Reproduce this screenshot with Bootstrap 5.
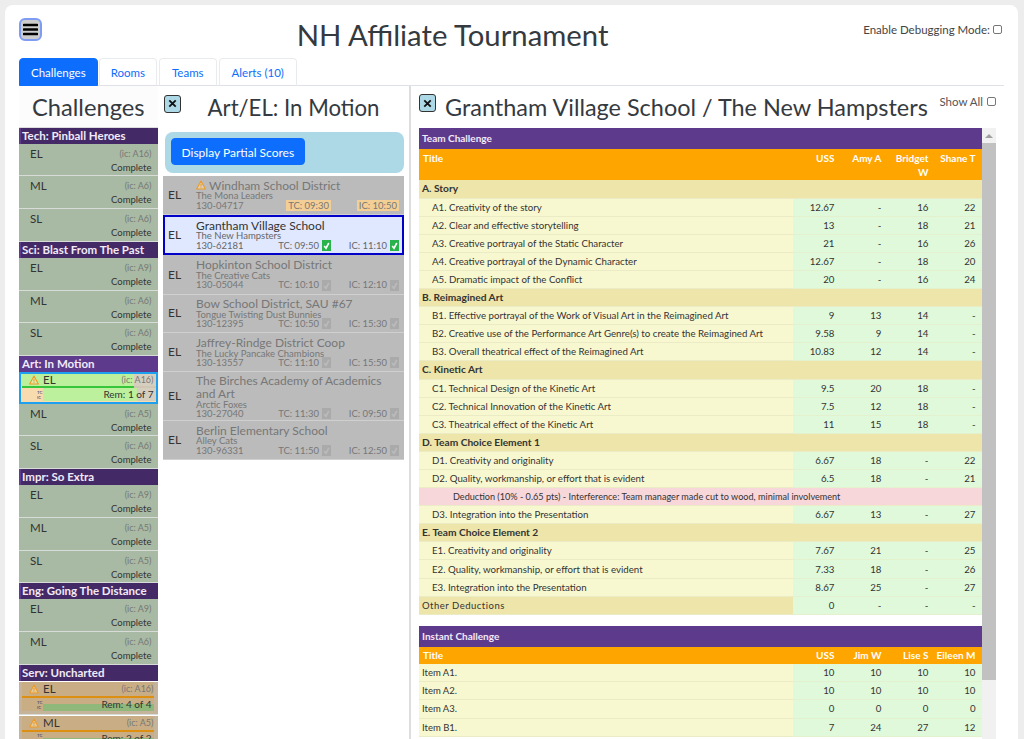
<!DOCTYPE html>
<html lang="en">
<head>
<meta charset="utf-8">
<title>NH Affiliate Tournament</title>
<link href="https://cdn.jsdelivr.net/npm/bootstrap@5.3.0/dist/css/bootstrap.min.css" rel="stylesheet">
<style>
html,body{height:739px;overflow:hidden}
body{background:#eeeded;font-family:"Lato","Noto Sans",sans-serif;color:#333}
.sheet{margin:5px 6px 0 5px;height:734px;background:#fff;border-radius:8px 8px 0 0;padding:13px 14px 0;display:flex;flex-direction:column;overflow:hidden}
.topbar{height:39.500px;display:flex;align-items:flex-start}
.burger{width:23px;height:23px;padding:0;background:#ccc;border:2px solid #7f9cf5;border-radius:6px;display:flex;align-items:center;justify-content:center}
.page-title{flex:1;text-align:center;font-size:29.300px;font-weight:400;margin:0;line-height:34px;color:#343a40}
.debug{font-size:11.500px;color:#444;margin:3px 2px 0 0;display:flex;align-items:center;gap:3px;white-space:nowrap}
.tinybox{width:9px;height:9px;margin:0;appearance:none;border:1px solid #777;border-radius:2px;background:#fff;flex:none}
.tabs-wrap.nav-tabs{height:28.500px;font-size:11.500px;flex-wrap:nowrap;border-color:#dee2e6}
.tabs-wrap .nav-link{height:28.500px;padding:5px 11px;border-radius:4px 4px 0 0;color:#0d6efd;border:1px solid #e9ecef;border-bottom-color:#dee2e6;margin-right:1px}
.tabs-wrap .nav-item+.nav-item+.nav-item .nav-link{padding:5px 12px;margin-left:1px}
.tabs-wrap .nav-link.active{background:#0d6efd;color:#fff;border-color:#0d6efd}
.panes{display:flex;flex:1;min-height:0}
.pane-a{width:138.500px;flex:none;overflow:hidden}
.pane-b{width:253.500px;flex:none;border-right:2px solid #ddd;padding:0 5px 0 5.500px;overflow:hidden}
.pane-c{flex:1;min-width:0;padding:0 0 0 8px;overflow:hidden}
.pane-a h2{font-size:23.700px;font-weight:400;margin:0;height:41.500px;line-height:43px;text-align:center;background:#fcfcfc;border-bottom:1px solid #ddd;color:#343a40}
.grp{background:#432a66;color:#f2eaf8;font-weight:700;font-size:11.500px;height:16.400px;line-height:16px;padding-left:1px;border-left:2px solid #5e3a8c;white-space:nowrap}
.grp.on{background:#5e3a8c}
.ev{height:32.600px;background:#a8baa3;border-bottom:1px solid #d8dcd8;font-size:11.500px;color:#333;padding:2px 5px 0 11px}
.ev-top{display:flex;justify-content:space-between;line-height:15px;padding-right:1px}
.ev-ic{font-size:9px;color:#777}
.ev-st{font-size:9.500px;text-align:right;line-height:13px;padding:0 1px 0 0;color:#333}
.ev.sel{height:31.500px;background:#f8dcb0;border:2px solid #1ea0f0;padding:0}
.ev-tan{background:#c5b49c;padding:0}
.ev-head{display:flex;justify-content:space-between;align-items:center;line-height:12px;height:12px;padding:0 2px 0 8px}
.ev.sel .ev-head{background:linear-gradient(90deg,#bdf09c 84%,#d6cfc0 84%)}
.ev-tan .ev-head{height:14px;margin:1px 4px 0 3px;padding:0 0 0 7px;background:#c9ae85}
.ev-label{display:flex;align-items:center;gap:4px}
.meter{height:2px;margin:0 0 0 1px;background:#cfc6b4}
.meter i{display:block;height:2px;background:#36c63c}
.ev-tan .meter{margin:0 4px 0 3px;background:#dd8f12}
.rem{display:flex;align-items:center;font-size:10px;height:13px}
.rem-key{width:6px;margin-left:16px;font-size:4.500px;line-height:5px;color:#336;flex:none;overflow:visible}
.rem-fill{flex:1;text-align:right;padding-right:2px;background:linear-gradient(90deg,#bdf09c 83%,#d6cfc0 83%);height:100%;line-height:13px}
.ev-tan .rem{margin:0 4px 0 3px;background:#c9ae85}
.ev-tan .rem-key{margin-left:15px}
.ev-tan .rem-fill{background:linear-gradient(#c9ae85 45%,#8fb87a 45%)}
.closer{width:17px;height:18px;padding:0;background:#add8e6;border:1.500px solid #333;border-radius:3px;display:flex;align-items:center;justify-content:center;flex:none}
.b-head{display:flex;height:43px;padding:8.500px 0 0 1px;align-items:flex-start}
.b-head h2{flex:1;text-align:center;margin:-1px 0 0;font-size:22.200px;line-height:28px;font-weight:400;color:#343a40;padding-left:2px}
.partial{background:#add8e6;border-radius:8px;height:41px;padding:6px;margin:3px 0 3px 2px}
.partial .btn{font-size:12px;padding:0 9.500px;height:27px;line-height:27px;border-radius:4px}
.teams{background:#bbb;margin:0}
.tm{display:flex;height:38.800px;border-bottom:1px solid #d0d0d0;color:#777;align-items:center;padding:0 5px}
.tm.tall{height:49px}
.tm.cur{height:40px;background:#dfe8ff;border:2px solid #0000c8;margin-bottom:1px;padding:0 3px;color:#666}
.tm-lv{width:28px;font-size:12px;color:#333;flex:none}
.tm-main{flex:1;min-width:0}
.tm-name{font-size:12px;line-height:11.500px;display:flex;align-items:center;gap:3px}
.tm.tall .tm-name{line-height:13px}
.tm.cur .tm-name{color:#333}
.tm-sub{font-size:9.500px;line-height:9.500px}
.tm-line{display:flex;align-items:center;font-size:9.500px;line-height:9.500px;height:9.500px}
.tm-no{flex:1}
.slot{display:flex;align-items:center;justify-content:flex-end;gap:3px;white-space:nowrap}
.slot+.slot{width:68px}
.tick{width:9px;height:11px;background:#aaa;display:flex;align-items:center;justify-content:center;flex:none}
.tick.ok{background:#28b44a}
.chip{background:#f3cf96;padding:1px 2px;color:#777;white-space:nowrap}
.c-head{display:flex;height:42px;align-items:flex-start}
.c-head h2{margin:0 0 0 9px;font-size:23.450px;font-weight:400;line-height:28px;padding-top:7px;color:#343a40;flex:1;white-space:nowrap}
.c-head .closer{margin-top:8px}
.showall{font-size:11.500px;color:#555;display:flex;align-items:center;gap:4px;margin:7px 8px 0 0;white-space:nowrap}
.scroller{display:flex;align-items:stretch;height:620px}
.sheets{width:562.500px;flex:none}
.bar{width:14px;flex:none;background:#f1f1f1;display:flex;flex-direction:column;align-items:center;height:611px}
.bar i{display:block;width:0;height:0;border-left:4px solid transparent;border-right:4px solid transparent;border-bottom:4px solid #a0a0a0;margin:6px 0 5px}
.bar b{display:block;width:14px;height:537px;background:#c1c1c1}
.score.table{table-layout:fixed;font-size:9.700px;width:562.500px;margin:0 0 11px;color:#333}
.score.table>*>*>*{padding:0 3px;height:18.100px;line-height:17px;border-bottom:1px solid #ebebc6;vertical-align:middle}
.score.table>*>*>.th-purple{--bs-table-bg:#5e3a8c;color:#f2eaf8;height:21px;font-weight:700;font-size:10px;border-bottom:0}
.score.table>*>*>.th-orange{--bs-table-bg:#ffa500;color:#fff;font-weight:700;font-size:10px;vertical-align:top;line-height:14px;padding:2px 6px 0 0;text-align:right;border:0;white-space:nowrap}
.score.table>*>*>.th-orange.tl{text-align:left;padding-left:4px}
.score .hi>th{height:31px}
.score.table .lo>th{height:17px;padding-top:1px}
.score .sect{--bs-table-bg:#ede5a9;font-weight:700;font-size:10.200px;color:#333}
.score.table>*>*>.line{--bs-table-bg:#f8f8d0;padding-left:13px}
.score.table>*>*>.line.flat{padding-left:3px;font-size:9.500px}
.score.table>*>*>.other{--bs-table-bg:#ede5a9;font-size:10.500px;letter-spacing:.5px}
.score.table>*>*>.num{--bs-table-bg:#e0f9db;text-align:right;padding-right:6px;border-bottom-color:#e4f1cf}
.score.table>*>*>.ded{--bs-table-bg:#f8d7da;padding-left:34px;font-size:9.100px}
</style>
</head>
<body>
<svg width="0" height="0" class="d-block position-absolute">
<defs>
<symbol id="warn" viewBox="0 0 16 16"><path d="M8 1.500 15 14.500H1Z" fill="#fbe6b8" fill-opacity=".5" stroke="#ee9a25" stroke-width="1.700" stroke-linejoin="round"/><path d="M8 6v4.500M8 11.600v1.200" stroke="#ee9a25" stroke-width="1.700"/></symbol>
<symbol id="chk" viewBox="0 0 9 11"><path d="M2.200 6 4 8.200 6.800 3" fill="none" stroke="currentColor" stroke-width="1.600"/></symbol>
<symbol id="ex" viewBox="0 0 12 12"><path d="M2.500 2.500 9.500 9.500M9.500 2.500 2.500 9.500" stroke="#111" stroke-width="2"/></symbol>
</defs>
</svg>
<div class="sheet">
  <div class="topbar">
    <button class="burger" type="button" aria-label="Menu"><svg width="15" height="13" viewBox="0 0 15 13"><path d="M1 2h13M1 6.500h13M1 11h13" stroke="#000" stroke-width="2.600" stroke-linecap="round"/></svg></button>
    <h1 class="page-title">NH Affiliate Tournament</h1>
    <label class="debug">Enable Debugging Mode: <input class="tinybox" type="checkbox"></label>
  </div>
  <ul class="nav nav-tabs tabs-wrap">
    <li class="nav-item"><a class="nav-link active" href="#">Challenges</a></li>
    <li class="nav-item"><a class="nav-link" href="#">Rooms</a></li>
    <li class="nav-item"><a class="nav-link" href="#">Teams</a></li>
    <li class="nav-item"><a class="nav-link" href="#">Alerts (10)</a></li>
  </ul>
  <div class="panes">
    <div class="pane-a">
      <h2>Challenges</h2>
      <div class="grp">Tech: Pinball Heroes</div>
      <div class="ev"><div class="ev-top"><span>EL</span><span class="ev-ic">(ic: A16)</span></div><div class="ev-st">Complete</div></div>
      <div class="ev"><div class="ev-top"><span>ML</span><span class="ev-ic">(ic: A6)</span></div><div class="ev-st">Complete</div></div>
      <div class="ev"><div class="ev-top"><span>SL</span><span class="ev-ic">(ic: A6)</span></div><div class="ev-st">Complete</div></div>
      <div class="grp">Sci: Blast From The Past</div>
      <div class="ev"><div class="ev-top"><span>EL</span><span class="ev-ic">(ic: A9)</span></div><div class="ev-st">Complete</div></div>
      <div class="ev"><div class="ev-top"><span>ML</span><span class="ev-ic">(ic: A6)</span></div><div class="ev-st">Complete</div></div>
      <div class="ev"><div class="ev-top"><span>SL</span><span class="ev-ic">(ic: A6)</span></div><div class="ev-st">Complete</div></div>
      <div class="grp on">Art: In Motion</div>
      <div class="ev sel">
        <div class="ev-head"><span class="ev-label"><svg width="10" height="10"><use href="#warn"/></svg>EL</span><span class="ev-ic">(ic: A16)</span></div>
        <div class="meter"><i style="width:84%"></i></div>
        <div class="rem"><span class="rem-key">TC<br>IC</span><span class="rem-fill">Rem: 1 of 7</span></div>
      </div>
      <div class="ev"><div class="ev-top"><span>ML</span><span class="ev-ic">(ic: A5)</span></div><div class="ev-st">Complete</div></div>
      <div class="ev"><div class="ev-top"><span>SL</span><span class="ev-ic">(ic: A6)</span></div><div class="ev-st">Complete</div></div>
      <div class="grp">Impr: So Extra</div>
      <div class="ev"><div class="ev-top"><span>EL</span><span class="ev-ic">(ic: A9)</span></div><div class="ev-st">Complete</div></div>
      <div class="ev"><div class="ev-top"><span>ML</span><span class="ev-ic">(ic: A5)</span></div><div class="ev-st">Complete</div></div>
      <div class="ev"><div class="ev-top"><span>SL</span><span class="ev-ic">(ic: A5)</span></div><div class="ev-st">Complete</div></div>
      <div class="grp">Eng: Going The Distance</div>
      <div class="ev"><div class="ev-top"><span>EL</span><span class="ev-ic">(ic: A9)</span></div><div class="ev-st">Complete</div></div>
      <div class="ev"><div class="ev-top"><span>ML</span><span class="ev-ic">(ic: A6)</span></div><div class="ev-st">Complete</div></div>
      <div class="grp">Serv: Uncharted</div>
      <div class="ev ev-tan">
        <div class="ev-head"><span class="ev-label"><svg width="10" height="10"><use href="#warn"/></svg>EL</span><span class="ev-ic">(ic: A16)</span></div>
        <div class="meter"></div>
        <div class="rem"><span class="rem-key">TC<br>IC</span><span class="rem-fill">Rem: 4 of 4</span></div>
      </div>
      <div class="ev ev-tan">
        <div class="ev-head"><span class="ev-label"><svg width="10" height="10"><use href="#warn"/></svg>ML</span><span class="ev-ic">(ic: A5)</span></div>
        <div class="meter"></div>
        <div class="rem"><span class="rem-key">TC<br>IC</span><span class="rem-fill">Rem: 2 of 2</span></div>
      </div>
    </div>
    <div class="pane-b">
      <div class="b-head">
        <button class="closer" type="button" aria-label="Close"><svg width="11" height="11"><use href="#ex"/></svg></button>
        <h2>Art/EL: In Motion</h2>
      </div>
      <div class="partial"><button class="btn btn-primary" type="button">Display Partial Scores</button></div>
      <div class="teams">
        <div class="tm"><div class="tm-lv">EL</div><div class="tm-main"><div class="tm-name"><svg width="10" height="10"><use href="#warn"/></svg>Windham School District</div><div class="tm-sub">The Mona Leaders</div><div class="tm-line"><span class="tm-no">130-04717</span><span class="slot"><span class="chip">TC: 09:30</span></span><span class="slot"><span class="chip">IC: 10:50</span></span></div></div></div>
        <div class="tm cur"><div class="tm-lv">EL</div><div class="tm-main"><div class="tm-name">Grantham Village School</div><div class="tm-sub">The New Hampsters</div><div class="tm-line"><span class="tm-no">130-62181</span><span class="slot">TC: 09:50 <span class="tick ok text-white"><svg width="9" height="11"><use href="#chk"/></svg></span></span><span class="slot">IC: 11:10 <span class="tick ok text-white"><svg width="9" height="11"><use href="#chk"/></svg></span></span></div></div></div>
        <div class="tm"><div class="tm-lv">EL</div><div class="tm-main"><div class="tm-name">Hopkinton School District</div><div class="tm-sub">The Creative Cats</div><div class="tm-line"><span class="tm-no">130-05044</span><span class="slot">TC: 10:10 <span class="tick"><svg width="9" height="11" color="#bbb"><use href="#chk"/></svg></span></span><span class="slot">IC: 12:10 <span class="tick"><svg width="9" height="11" color="#bbb"><use href="#chk"/></svg></span></span></div></div></div>
        <div class="tm"><div class="tm-lv">EL</div><div class="tm-main"><div class="tm-name">Bow School District, SAU #67</div><div class="tm-sub">Tongue Twisting Dust Bunnies</div><div class="tm-line"><span class="tm-no">130-12395</span><span class="slot">TC: 10:50 <span class="tick"><svg width="9" height="11" color="#bbb"><use href="#chk"/></svg></span></span><span class="slot">IC: 15:30 <span class="tick"><svg width="9" height="11" color="#bbb"><use href="#chk"/></svg></span></span></div></div></div>
        <div class="tm"><div class="tm-lv">EL</div><div class="tm-main"><div class="tm-name">Jaffrey-Rindge District Coop</div><div class="tm-sub">The Lucky Pancake Chambions</div><div class="tm-line"><span class="tm-no">130-13557</span><span class="slot">TC: 11:10 <span class="tick"><svg width="9" height="11" color="#bbb"><use href="#chk"/></svg></span></span><span class="slot">IC: 15:50 <span class="tick"><svg width="9" height="11" color="#bbb"><use href="#chk"/></svg></span></span></div></div></div>
        <div class="tm tall"><div class="tm-lv">EL</div><div class="tm-main"><div class="tm-name d-block">The Birches Academy of Academics<br>and Art</div><div class="tm-sub">Arctic Foxes</div><div class="tm-line"><span class="tm-no">130-27040</span><span class="slot">TC: 11:30 <span class="tick"><svg width="9" height="11" color="#bbb"><use href="#chk"/></svg></span></span><span class="slot">IC: 09:50 <span class="tick"><svg width="9" height="11" color="#bbb"><use href="#chk"/></svg></span></span></div></div></div>
        <div class="tm"><div class="tm-lv">EL</div><div class="tm-main"><div class="tm-name">Berlin Elementary School</div><div class="tm-sub">Alley Cats</div><div class="tm-line"><span class="tm-no">130-96331</span><span class="slot">TC: 11:50 <span class="tick"><svg width="9" height="11" color="#bbb"><use href="#chk"/></svg></span></span><span class="slot">IC: 12:50 <span class="tick"><svg width="9" height="11" color="#bbb"><use href="#chk"/></svg></span></span></div></div></div>
      </div>
    </div>
    <div class="pane-c">
      <div class="c-head">
        <button class="closer" type="button" aria-label="Close"><svg width="11" height="11"><use href="#ex"/></svg></button>
        <h2>Grantham Village School / The New Hampsters</h2>
        <label class="showall">Show All <input class="tinybox" type="checkbox"></label>
      </div>
      <div class="scroller">
        <div class="sheets">
          <table class="table score">
            <colgroup><col><col style="width:47px"><col style="width:47px"><col style="width:47px"><col style="width:47px"></colgroup>
            <thead>
              <tr><th class="th-purple" colspan="5">Team Challenge</th></tr>
              <tr class="hi"><th class="th-orange tl">Title</th><th class="th-orange">USS</th><th class="th-orange">Amy A</th><th class="th-orange">Bridget<br>W</th><th class="th-orange">Shane T</th></tr>
            </thead>
            <tbody>
              <tr><td class="sect" colspan="5">A. Story</td></tr>
              <tr><td class="line">A1. Creativity of the story</td><td class="num">12.67</td><td class="num">-</td><td class="num">16</td><td class="num">22</td></tr>
              <tr><td class="line">A2. Clear and effective storytelling</td><td class="num">13</td><td class="num">-</td><td class="num">18</td><td class="num">21</td></tr>
              <tr><td class="line">A3. Creative portrayal of the Static Character</td><td class="num">21</td><td class="num">-</td><td class="num">16</td><td class="num">26</td></tr>
              <tr><td class="line">A4. Creative portrayal of the Dynamic Character</td><td class="num">12.67</td><td class="num">-</td><td class="num">18</td><td class="num">20</td></tr>
              <tr><td class="line">A5. Dramatic impact of the Conflict</td><td class="num">20</td><td class="num">-</td><td class="num">16</td><td class="num">24</td></tr>
              <tr><td class="sect" colspan="5">B. Reimagined Art</td></tr>
              <tr><td class="line">B1. Effective portrayal of the Work of Visual Art in the Reimagined Art</td><td class="num">9</td><td class="num">13</td><td class="num">14</td><td class="num">-</td></tr>
              <tr><td class="line">B2. Creative use of the Performance Art Genre(s) to create the Reimagined Art</td><td class="num">9.58</td><td class="num">9</td><td class="num">14</td><td class="num">-</td></tr>
              <tr><td class="line">B3. Overall theatrical effect of the Reimagined Art</td><td class="num">10.83</td><td class="num">12</td><td class="num">14</td><td class="num">-</td></tr>
              <tr><td class="sect" colspan="5">C. Kinetic Art</td></tr>
              <tr><td class="line">C1. Technical Design of the Kinetic Art</td><td class="num">9.5</td><td class="num">20</td><td class="num">18</td><td class="num">-</td></tr>
              <tr><td class="line">C2. Technical Innovation of the Kinetic Art</td><td class="num">7.5</td><td class="num">12</td><td class="num">18</td><td class="num">-</td></tr>
              <tr><td class="line">C3. Theatrical effect of the Kinetic Art</td><td class="num">11</td><td class="num">15</td><td class="num">18</td><td class="num">-</td></tr>
              <tr><td class="sect" colspan="5">D. Team Choice Element 1</td></tr>
              <tr><td class="line">D1. Creativity and originality</td><td class="num">6.67</td><td class="num">18</td><td class="num">-</td><td class="num">22</td></tr>
              <tr><td class="line">D2. Quality, workmanship, or effort that is evident</td><td class="num">6.5</td><td class="num">18</td><td class="num">-</td><td class="num">21</td></tr>
              <tr><td class="ded" colspan="5">Deduction (10% - 0.65 pts) - Interference: Team manager made cut to wood, minimal involvement</td></tr>
              <tr><td class="line">D3. Integration into the Presentation</td><td class="num">6.67</td><td class="num">13</td><td class="num">-</td><td class="num">27</td></tr>
              <tr><td class="sect" colspan="5">E. Team Choice Element 2</td></tr>
              <tr><td class="line">E1. Creativity and originality</td><td class="num">7.67</td><td class="num">21</td><td class="num">-</td><td class="num">25</td></tr>
              <tr><td class="line">E2. Quality, workmanship, or effort that is evident</td><td class="num">7.33</td><td class="num">18</td><td class="num">-</td><td class="num">26</td></tr>
              <tr><td class="line">E3. Integration into the Presentation</td><td class="num">8.67</td><td class="num">25</td><td class="num">-</td><td class="num">27</td></tr>
              <tr><td class="line flat other">Other Deductions</td><td class="num">0</td><td class="num">-</td><td class="num">-</td><td class="num">-</td></tr>
            </tbody>
          </table>
          <table class="table score">
            <colgroup><col><col style="width:47px"><col style="width:47px"><col style="width:47px"><col style="width:47px"></colgroup>
            <thead>
              <tr><th class="th-purple" colspan="5">Instant Challenge</th></tr>
              <tr class="lo"><th class="th-orange tl">Title</th><th class="th-orange">USS</th><th class="th-orange">Jim W</th><th class="th-orange">Lise S</th><th class="th-orange">Eileen M</th></tr>
            </thead>
            <tbody>
              <tr><td class="line flat">Item A1.</td><td class="num">10</td><td class="num">10</td><td class="num">10</td><td class="num">10</td></tr>
              <tr><td class="line flat">Item A2.</td><td class="num">10</td><td class="num">10</td><td class="num">10</td><td class="num">10</td></tr>
              <tr><td class="line flat">Item A3.</td><td class="num">0</td><td class="num">0</td><td class="num">0</td><td class="num">0</td></tr>
              <tr><td class="line flat">Item B1.</td><td class="num">7</td><td class="num">24</td><td class="num">27</td><td class="num">12</td></tr>
            </tbody>
          </table>
        </div>
        <div class="bar"><i></i><b></b></div>
      </div>
    </div>
  </div>
</div>
<script src="https://cdn.jsdelivr.net/npm/bootstrap@5.3.0/dist/js/bootstrap.bundle.min.js"></script>
</body>
</html>
